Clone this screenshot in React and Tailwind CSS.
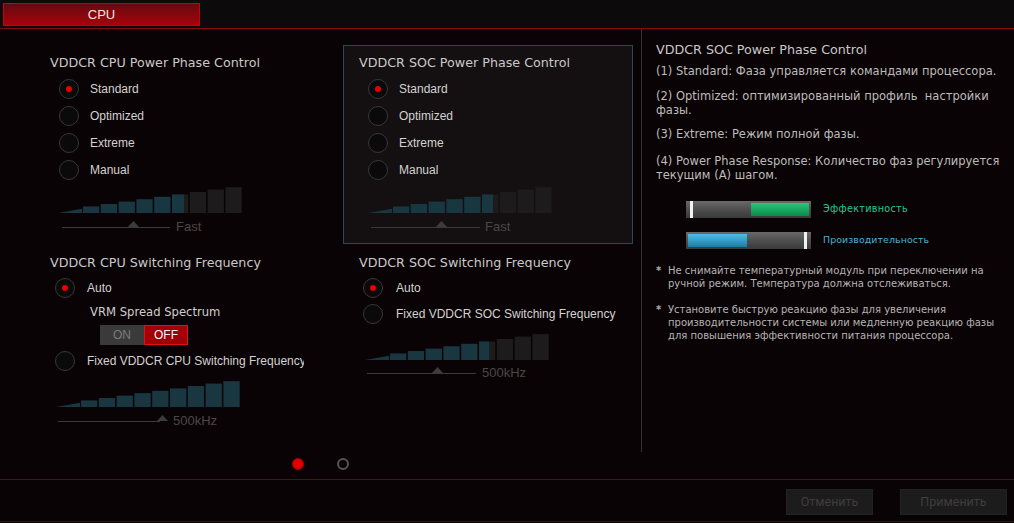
import React from 'react';

const TITLE = "font-['DejaVu_Sans',sans-serif] text-[12.7px] leading-[16px] h-[16px] text-[#c9c9c9] whitespace-nowrap";
const LABEL = "font-['Liberation_Sans',Arial,sans-serif] text-[12px] text-[#d2d2d2] whitespace-nowrap";

const Radio = ({ on }) => (
    <span className="w-5 h-5 shrink-0 rounded-full border-[1.5px] border-[#383636] bg-[#0b0a0a] flex items-center justify-center">
        {on && <span className="w-[6px] h-[6px] rounded-full bg-[#e60000]" />}
    </span>
);

// stepped phase bars, teal up to `fill` px, dark gray after
const Bars = ({ fill = 185 }) => {
    const W = 185;
    const H = 26;
    const top = (x) => H - 1 - (x / W) * 25;
    const TEAL = '#183741';
    const GRAY = '#1d1b1c';
    const rects = [];
    for (let i = 0; i < 9; i++) {
        const x = 25 + i * 17.8;
        const w = 16.3;
        const y = top(x + w);
        if (x + w <= fill) {
            rects.push(<rect key={i} x={x} y={y} width={w} height={H - y} fill={TEAL} />);
        } else if (x >= fill) {
            rects.push(<rect key={i} x={x} y={y} width={w} height={H - y} fill={GRAY} />);
        } else {
            rects.push(<rect key={i + 'a'} x={x} y={y} width={fill - x} height={H - y} fill={TEAL} />);
            rects.push(<rect key={i + 'b'} x={fill} y={y} width={x + w - fill} height={H - y} fill={GRAY} />);
        }
    }
    return (
        <svg width={W} height={H} className="block">
            <polygon points={`0,${H} 24,${H} 24,${top(24)}`} fill={TEAL} />
            {rects}
        </svg>
    );
};

const Slider = ({ lineW, triLeft, label, textMl }) => (
    <div className="relative flex items-center h-[16px]">
        <div className={`${lineW} h-px bg-[#3a3838]`} />
        <svg width="11" height="6" className={`absolute ${triLeft} top-[2px]`}>
            <polygon points="0,6 5.5,0 11,6" fill="#3d3b3b" />
        </svg>
        <span className={`${textMl} font-['Liberation_Sans',Arial,sans-serif] text-[13px] text-[#4a4747]`}>{label}</span>
    </div>
);

const PhaseRadios = () => (
    <div className="mt-[4px] flex flex-col">
        {['Standard', 'Optimized', 'Extreme', 'Manual'].map((t, i) => (
            <div key={t} className="h-[27px] flex items-center gap-[11px] ml-[9px]">
                <Radio on={i === 0} />
                <span className={LABEL}>{t}</span>
            </div>
        ))}
    </div>
);

const Meter = ({ kind }) => (
    <div className="w-[125px] h-[17px] bg-gradient-to-b from-[#6a6a6a] via-[#4e4e4e] to-[#3a3a3a] relative">
        {kind === 'eff' ? (
            <>
                <div className="absolute left-[4px] top-0 w-[3px] h-full bg-[#f2f2f2]" />
                <div className="absolute left-[65px] top-[2px] w-[58px] h-[13px] bg-gradient-to-b from-[#26c878] to-[#0c8a4a]" />
            </>
        ) : (
            <>
                <div className="absolute left-[2px] top-[2px] w-[59px] h-[13px] bg-gradient-to-b from-[#4cbde6] to-[#1a7fa8]" />
                <div className="absolute left-[118px] top-0 w-[3px] h-full bg-[#f2f2f2]" />
            </>
        )}
    </div>
);

export default function App() {
    const body = "font-['DejaVu_Sans',sans-serif] text-[11.5px] leading-[14px] text-[#bcbcbc]";
    const note = "font-['DejaVu_Sans',sans-serif] text-[10px] leading-[13px] text-[#b4b4b4]";
    return (
        <div className="w-[1014px] h-[523px] bg-[#0a0305] flex flex-col overflow-hidden">
            {/* header */}
            <div className="h-[29px] shrink-0 bg-[#0c0a0b] border-b border-[#860a12] pl-[3px] pt-[3px]">
                <div className="w-[197px] h-[23px] border border-[#c8000e] bg-gradient-to-b from-[#640a0e] to-[#a8000b] flex items-center justify-center font-['Liberation_Sans',Arial,sans-serif] text-[13px] text-[#f1e4e4]">
                    CPU
                </div>
            </div>

            {/* main */}
            <div className="h-[450px] shrink-0 flex">
                <div className="w-[641px] flex flex-col">
                    <div className="flex">
                        {/* CPU column */}
                        <div className="w-[343px] pl-[50px] pt-[26px]">
                            <div className={TITLE}>VDDCR CPU Power Phase Control</div>
                            <PhaseRadios />
                            <div className="mt-[4px] ml-[8px]"><Bars fill={126} /></div>
                            <div className="mt-[6px] ml-[12px]">
                                <Slider lineW="w-[108px]" triLeft="left-[66px]" label="Fast" textMl="ml-[6px]" />
                            </div>

                            <div className={`mt-[20px] ${TITLE}`}>VDDCR CPU Switching Frequency</div>
                            <div className="mt-[4px] h-[26px] flex items-center gap-[12px] ml-[5px]">
                                <Radio on />
                                <span className={LABEL}>Auto</span>
                            </div>
                            <div className={`mt-[3px] ml-[40px] h-[16px] leading-[16px] font-['DejaVu_Sans',sans-serif] text-[11.6px] text-[#cfcfcf]`}>
                                VRM Spread Spectrum
                            </div>
                            <div className="mt-[5px] ml-[50px] flex h-[20px] font-['Liberation_Sans',Arial,sans-serif] text-[12px]">
                                <div className="w-[44px] bg-[#3a3a3a] text-[#7a7a7a] flex items-center justify-center">ON</div>
                                <div className="w-[44px] bg-[#a00008] border border-[#e0101a] text-[#f4f4f4] flex items-center justify-center">OFF</div>
                            </div>
                            <div className="mt-[3px] h-[26px] flex items-center gap-[12px] ml-[5px]">
                                <Radio />
                                <span className={`${LABEL} w-[217px] overflow-hidden`}>Fixed VDDCR CPU Switching Frequency</span>
                            </div>
                            <div className="mt-[7px] ml-[6px]"><Bars /></div>
                            <div className="mt-[6px] ml-[8px]">
                                <Slider lineW="w-[102px]" triLeft="left-[99px]" label="500kHz" textMl="ml-[13px]" />
                            </div>
                        </div>

                        {/* SOC column */}
                        <div className="w-[290px] pt-[16px]">
                            <div className="h-[199px] border border-[#2c4852] bg-[#141011] pt-[9px] pl-[15px]">
                                <div className={TITLE}>VDDCR SOC Power Phase Control</div>
                                <PhaseRadios />
                                <div className="mt-[4px] ml-[9px]"><Bars fill={125} /></div>
                                <div className="mt-[6px] ml-[12px]">
                                    <Slider lineW="w-[109px]" triLeft="left-[65px]" label="Fast" textMl="ml-[5px]" />
                                </div>
                            </div>

                            <div className="pl-[16px]">
                                <div className={`mt-[11px] ${TITLE}`}>VDDCR SOC Switching Frequency</div>
                                <div className="mt-[4px] h-[26px] flex items-center gap-[13px] ml-[4px]">
                                    <Radio on />
                                    <span className={LABEL}>Auto</span>
                                </div>
                                <div className="h-[26px] flex items-center gap-[13px] ml-[4px]">
                                    <Radio />
                                    <span className={LABEL}>Fixed VDDCR SOC Switching Frequency</span>
                                </div>
                                <div className="mt-[7px] ml-[6px]"><Bars fill={124} /></div>
                                <div className="mt-[5px] ml-[8px]">
                                    <Slider lineW="w-[109px]" triLeft="left-[65px]" label="500kHz" textMl="ml-[6px]" />
                                </div>
                            </div>
                        </div>
                    </div>

                    {/* page dots */}
                    <div className="mt-auto mb-[9px] pl-[292px] flex items-center gap-[33px]">
                        <span className="w-[12px] h-[12px] rounded-full bg-[#e00000] border border-[#a00000]" />
                        <span className="w-[12px] h-[12px] rounded-full border-2 border-[#555]" />
                    </div>
                </div>

                {/* divider */}
                <div className="w-px h-[423px] bg-[#333131]" />

                {/* help panel */}
                <div className="flex-1 pl-[14px] pt-[13px] pr-[3px]">
                    <div className={TITLE}>VDDCR SOC Power Phase Control</div>
                    <p className={`mt-[6px] ${body}`}>(1) Standard: Фаза управляется командами процессора.</p>
                    <p className={`mt-[11px] ${body}`}>(2) Optimized: оптимизированный профиль&nbsp; настройки фазы.</p>
                    <p className={`mt-[10px] ${body}`}>(3) Extreme: Режим полной фазы.</p>
                    <p className={`mt-[13px] ${body}`}>(4) Power Phase Response: Количество фаз регулируется текущим (A) шагом.</p>

                    <div className="mt-[19px] ml-[30px] flex items-center gap-[12px]">
                        <Meter kind="eff" />
                        <span className="font-['DejaVu_Sans',sans-serif] text-[9.6px] tracking-[0.3px] text-[#1fcc90]">Эффективность</span>
                    </div>
                    <div className="mt-[14px] ml-[30px] flex items-center gap-[12px]">
                        <Meter kind="perf" />
                        <span className="font-['DejaVu_Sans',sans-serif] text-[9.4px] tracking-[0.1px] text-[#4fb0d6]">Производительность</span>
                    </div>

                    <div className={`mt-[15px] flex ${note}`}>
                        <span className="w-[12px] shrink-0 font-bold">*</span>
                        <p>Не снимайте температурный модуль при переключении на ручной режим. Температура должна отслеживаться.</p>
                    </div>
                    <div className={`mt-[13px] flex ${note}`}>
                        <span className="w-[12px] shrink-0 font-bold">*</span>
                        <p>Установите быструю реакцию фазы для увеличения производительности системы или медленную реакцию фазы для повышения эффективности питания процессора.</p>
                    </div>
                </div>
            </div>

            {/* footer */}
            <div className="h-[44px] shrink-0 border-t border-[#5e0a10] flex flex-col">
                <div className="h-[41px] flex justify-end items-start pt-[9px] pr-[7px] gap-[27px] font-['Roboto',sans-serif] text-[12.5px] text-[#3f3d3d]">
                    <div className="w-[87px] h-[26px] bg-[#1d1c1c] border border-[#242323] flex items-center justify-center">Отменить</div>
                    <div className="w-[107px] h-[26px] bg-[#1d1c1c] border border-[#242323] flex items-center justify-center">Применить</div>
                </div>
                <div className="h-px bg-[#4a0a0e]" />
            </div>
        </div>
    );
}
